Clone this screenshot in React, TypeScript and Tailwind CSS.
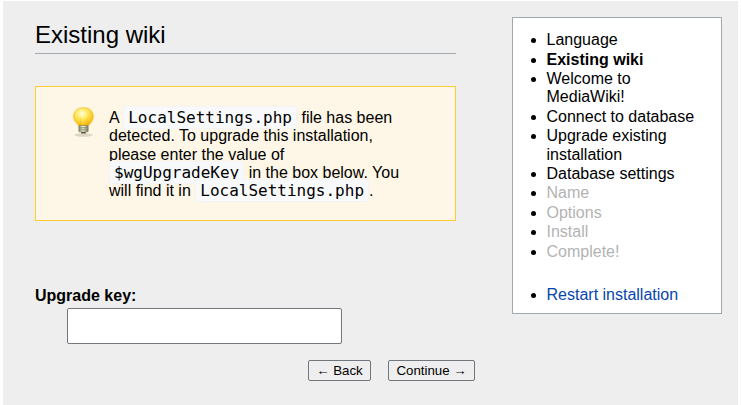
import React from 'react';

const Code: React.FC<{ children: React.ReactNode }> = ({ children }) => (
  <code className="bg-[#f8f9fa] rounded-[2px] border border-[#f3f4f6] px-[4px] py-px font-['DejaVu_Sans_Mono',monospace] text-[16px] leading-none text-[#000]">
    {children}
  </code>
);

const Bulb = () => (
  <svg width="24" height="32" viewBox="0 0 24 32" className="shrink-0">
    <defs>
      <radialGradient id="glass" cx="42%" cy="32%" r="68%">
        <stop offset="0%" stopColor="#fffde0" />
        <stop offset="45%" stopColor="#ffe95c" />
        <stop offset="85%" stopColor="#fcc419" />
        <stop offset="100%" stopColor="#eda90f" />
      </radialGradient>
      <linearGradient id="base" x1="0" x2="1" y1="0" y2="0">
        <stop offset="0%" stopColor="#8c9468" />
        <stop offset="45%" stopColor="#f0f0e2" />
        <stop offset="100%" stopColor="#7d8360" />
      </linearGradient>
    </defs>
    <ellipse cx="11.500" cy="28" rx="9" ry="1.800" fill="#cfc9b6" opacity="0.7" />
    <ellipse cx="11.500" cy="9.500" rx="11.200" ry="10.500" fill="#ffeeb0" opacity="0.7" />
    <path d="M11.500 0.800C6 0.800 1.800 4.600 1.800 9.500c0 3.300 2 5.400 3.500 7.200.7.900 1.200 1.600 1.300 2.300h9.800c.1-.7.600-1.400 1.300-2.300 1.500-1.800 3.500-3.900 3.500-7.200 0-4.900-4.200-8.700-9.700-8.700z" fill="url(#glass)" stroke="#e9b021" strokeWidth="0.6" />
    <path d="M9 18.500 8 11M14 18.500 15 11" stroke="#e0a82a" strokeWidth="0.5" fill="none" opacity="0.7" />
    <rect x="6.800" y="18.500" width="9.400" height="6.500" rx="1" fill="url(#base)" stroke="#6f7450" strokeWidth="0.5" />
    <path d="M7 20.800h9M7 22.900h9" stroke="#6f7450" strokeWidth="0.7" />
    <rect x="9" y="25" width="5" height="1.600" rx="0.8" fill="#55583f" />
  </svg>
);

const steps = [
  { label: 'Language', cls: 'text-black' },
  { label: 'Existing wiki', cls: 'text-black font-bold' },
  { label: 'Welcome to MediaWiki!', cls: 'text-black' },
  { label: 'Connect to database', cls: 'text-black' },
  { label: 'Upgrade existing installation', cls: 'text-black' },
  { label: 'Database settings', cls: 'text-black' },
  { label: 'Name', cls: 'text-[#b3b3b3]' },
  { label: 'Options', cls: 'text-[#b3b3b3]' },
  { label: 'Install', cls: 'text-[#b3b3b3]' },
  { label: 'Complete!', cls: 'text-[#b3b3b3]' },
];

export default function App() {
  return (
    <div className="w-[741px] h-[405px] overflow-hidden bg-white pl-[3px] pr-[3px] pt-px font-['Liberation_Sans',Arial,sans-serif] text-[16px] text-black">
      <div className="h-[404px] bg-[#eeeeee] flex items-start">
        <div className="w-[421px] ml-[32px] shrink-0">
          <h2 className="mt-[19px] h-[34px] border-b border-[#a2a9b1] text-[24px] leading-[30px]">Existing wiki</h2>
          <div className="mt-[32px] h-[135px] border border-[#fc3] bg-[#fef6e7] flex items-start pl-[36px] pt-[20px] pr-[50px]">
            <Bulb />
            <p className="ml-[13px] w-[295px] leading-[18.400px] text-[16px] pt-[1.800px]">
              A <Code>LocalSettings.php</Code> file has been detected. To upgrade this installation, please enter the value of <Code>$wgUpgradeKey</Code> in the box below. You will find it in <Code>LocalSettings.php</Code>.
            </p>
          </div>
          <label className="block mt-[65px] font-bold leading-[19px]">Upgrade key:</label>
          <input className="block mt-[3px] ml-[32px] w-[275px] h-[36px] bg-white border border-[#72777d] rounded-[2px]" />
          <div className="mt-[16px] flex justify-end gap-[17px] -mr-[19px]">
            <button className="h-[21px] w-[63px] bg-[#eeeeee] border border-[#72777d] rounded-[2px] text-[13.300px] leading-[19px] text-black">← Back</button>
            <button className="h-[21px] w-[87px] bg-[#eeeeee] border border-[#72777d] rounded-[2px] text-[13.300px] leading-[19px] text-black">Continue →</button>
          </div>
        </div>
        <div className="ml-[56px] mt-[16px] w-[210px] h-[297px] bg-white border border-[#a2a9b1] pt-[13.200px] pl-[33.500px] pr-[10px] leading-[18.400px]">
          <ul className="list-disc">
            {steps.map((s) => (
              <li key={s.label} className="mb-px"><span className={s.cls}>{s.label}</span></li>
            ))}
          </ul>
          <ul className="list-disc mt-[25px]">
            <li><a href="#" className="text-[#0645ad]">Restart installation</a></li>
          </ul>
        </div>
      </div>
    </div>
  );
}
